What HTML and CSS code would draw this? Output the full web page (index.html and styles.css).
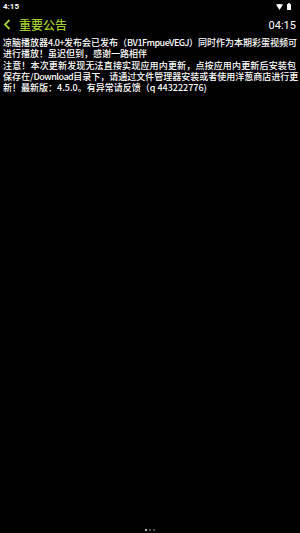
FILE: index.html
```html
<!DOCTYPE html>
<html lang="zh-CN">
<head>
<meta charset="utf-8">
<title>重要公告</title>
<link rel="stylesheet" href="styles.css">
</head>
<body>
<div class="screen">
  <div class="statusbar">
    <span class="clock">4:15</span>
    <span class="sys-icons">
      <svg class="wifi" width="7" height="6" viewBox="0 0 7 6"><path d="M0 0.6 Q3.5 -0.6 7 0.6 L3.5 6 Z" fill="#fff"/></svg>
      <svg class="battery" width="4" height="7" viewBox="0 0 4 7"><rect x="1.2" y="0" width="1.6" height="1" fill="#fff"/><rect x="0" y="1" width="4" height="6" rx="0.5" fill="#fff"/></svg>
    </span>
  </div>
  <header class="appbar">
    <div class="title-group">
      <svg class="back" width="8" height="11" viewBox="0 0 8 11"><path d="M6.5 1 L2 5.5 L6.5 10" fill="none" stroke="#a3cd2c" stroke-width="1.8"/></svg>
      <h1 class="title">重要公告</h1>
    </div>
    <span class="time">04:15</span>
  </header>
  <main class="content">
    <p class="para"><span class="line full">凉脑播放器<span class="latin">4.0+</span>发布会已发布（<span class="latin">BV1FmpueVEGJ</span>）同时作为本期彩蛋视频可</span><span class="line">进行播放！虽迟但到，感谢一路相伴</span></p>
    <p class="para"><span class="line full">注意！本次更新发现无法直接实现应用内更新，点按应用内更新后安装包</span><span class="line full">保存在/<span class="latin">Download</span>目录下，请通过文件管理器安装或者使用洋葱商店进行更</span><span class="line">新！最新版：4.5.0。有异常请反馈（q 443222776)</span></p>
  </main>
  <div class="pager">
    <span class="dot active"></span>
    <span class="dot"></span>
    <span class="dot"></span>
  </div>
</div>
</body>
</html>
```
FILE: styles.css
```css
html, body {
  margin: 0;
  padding: 0;
  background: #000;
}
.screen {
  width: 300px;
  height: 533px;
  display: flex;
  flex-direction: column;
  background: #000;
  color: #fff;
  font-family: "Noto Sans CJK SC", "Noto Sans", sans-serif;
  overflow: hidden;
}
.statusbar {
  height: 14px;
  display: flex;
  align-items: center;
  justify-content: space-between;
  padding: 0 9px 0 3px;
}
.clock {
  font-family: Roboto, "Noto Sans", sans-serif;
  font-size: 8px;
  font-weight: 700;
  line-height: 8px;
  margin-top: -1px;
}
.sys-icons {
  display: flex;
  align-items: center;
  gap: 4px;
  margin-top: -1px;
}
.appbar {
  height: 21px;
  display: flex;
  align-items: center;
  justify-content: space-between;
  padding: 0 4px 0 3px;
}
.title-group {
  display: flex;
  align-items: center;
  gap: 8px;
}
.back {
  display: block;
}
.title {
  margin: 0;
  font-size: 12px;
  font-weight: 500;
  line-height: 16px;
  color: #a3cd2c;
}
.time {
  font-family: Roboto, "Noto Sans", sans-serif;
  font-size: 11px;
  line-height: 12px;
  color: #fff;
  margin-top: 2px;
}
.content {
  flex: 1;
  padding: 2px 4px 0 3px;
}
.para {
  margin: 0 0 1px 0;
  font-size: 9px;
  font-weight: 500;
  line-height: 11px;
}
.line {
  display: block;
  white-space: nowrap;
}
.line.full {
  text-align: justify;
  text-align-last: justify;
}
.latin {
  letter-spacing: -0.5px;
}
.pager {
  display: flex;
  justify-content: center;
  gap: 1.5px;
  padding-bottom: 2px;
}
.dot {
  width: 2.5px;
  height: 2.5px;
  border-radius: 50%;
  background: #666;
}
.dot.active {
  background: #eee;
}
```
